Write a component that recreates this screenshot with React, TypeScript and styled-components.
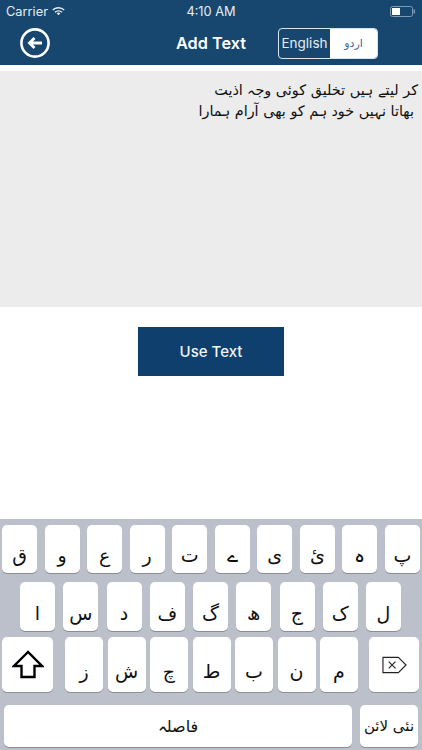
import React from 'react';
import styled, { createGlobalStyle } from 'styled-components';

const Global = createGlobalStyle`
  html, body { margin: 0; padding: 0; background: #fff; }
  body { font-family: "Liberation Sans", Arial, sans-serif; }
  * { box-sizing: border-box; }
`;
const Page = styled.div`
  width: 422px; height: 750px; display: flex; flex-direction: column; overflow: hidden; background: #fff;
`;
const Header = styled.header`
  height: 65px; background: #17466f; color: #fff; flex: none; display: flex; flex-direction: column;
`;
const StatusBar = styled.div`
  height: 22px; display: flex; align-items: center; justify-content: space-between; padding: 0 6px 0 6px;
  font: 12.8px "Inter", sans-serif; color: #e8eef3;
`;
const StatusSide = styled.div<{ $end?: boolean }>`
  width: 90px; display: flex; align-items: center; gap: 4px;
  justify-content: ${p => (p.$end ? 'flex-end' : 'flex-start')};
`;
const NavBar = styled.div`
  flex: 1; display: grid; grid-template-columns: 1fr auto 1fr; align-items: center; padding: 0 20px 1px;
`;
const BackButton = styled.button`
  width: 30px; height: 30px; padding: 0; border: 0; background: none; display: flex;
`;
const Title = styled.h1`
  margin: 0; text-align: center; font: 600 16.3px "Inter", sans-serif; color: #fff;
`;
const Segmented = styled.div`
  justify-self: end; margin-right: 24px;
  width: 100px; height: 31px; display: flex; border: 1px solid #d8e4ee; border-radius: 4px; overflow: hidden;
`;
const Segment = styled.div<{ $on?: boolean }>`
  flex: ${p => (p.$on ? '0 0 47px' : '1')}; display: flex; align-items: center; justify-content: center;
  background: ${p => (p.$on ? '#fff' : 'transparent')}; color: ${p => (p.$on ? '#3f6a8f' : '#e8eef3')};
  font: ${p => (p.$on ? '11px "DejaVu Sans"' : '13.5px "Inter"')}, sans-serif;
`;
const Editor = styled.div`
  margin-top: 6px; height: 236px; flex: none; background: #ececec; padding: 9px 4px 0; direction: rtl;
  font: 14.4px/21px "DejaVu Sans", sans-serif; color: #111;
`;
const Line = styled.div<{ $inset?: boolean }>`
  padding-right: ${p => (p.$inset ? '4px' : '0')};
`;
const ActionArea = styled.div`
  flex: 1; display: flex; justify-content: center; align-items: flex-start; padding-top: 20px;
`;
const UseButton = styled.button`
  width: 146px; height: 49px; border: 0; padding: 0; background: #0e3f6d; color: #f2f5f8;
  font: 500 15px "Inter", sans-serif;
`;
const Keyboard = styled.div`
  height: 231px; flex: none; background: #bbc0ca; display: flex; flex-direction: column; padding-top: 6px;
`;
const KeyRow = styled.div<{ $h: number; $mt: number; $pad: string; $gap?: number }>`
  display: flex; height: ${p => p.$h}px; margin-top: ${p => p.$mt}px; padding: ${p => p.$pad};
  justify-content: ${p => (p.$gap === undefined ? 'space-between' : 'flex-start')};
  gap: ${p => p.$gap ?? 0}px;
`;
const Key = styled.div<{ $w: number }>`
  width: ${p => p.$w}px; flex: none; background: #fff; border-radius: 5px;
  box-shadow: 0 1px 0 #8a8d93; display: flex; align-items: center; justify-content: center; padding-top: 12px;
  font: 19px "DejaVu Sans", sans-serif; color: #111;
`;
const Letters = styled.div`
  display: flex; gap: 4.5px; margin: 0 11px 0 12px;
`;
const IconKey = styled(Key)`
  padding-top: 0;
`;
const SpaceKey = styled(Key)`
  font-size: 16px; padding-top: 0;
`;
const ReturnKey = styled(Key)`
  font-size: 15px; padding-top: 0; white-space: nowrap; letter-spacing: -0.2px;
`;

const row1 = ['ق', 'و', 'ع', 'ر', 'ت', 'ے', 'ی', 'ئ', 'ہ', 'پ'];
const row2 = ['ا', 'س', 'د', 'ف', 'گ', 'ھ', 'ج', 'ک', 'ل'];
const row3 = ['ز', 'ش', 'چ', 'ط', 'ب', 'ن', 'م'];

export default function App() {
  return (
    <Page>
      <Global />
      <Header>
        <StatusBar>
          <StatusSide>
            Carrier
            <svg width="13" height="10" viewBox="0 0 15 11" fill="#e8eef3">
              <path d="M7.5 10.5 5.4 8.2a3 3 0 0 1 4.2 0Z" />
              <path d="M7.5 1C4.7 1 2.2 2.1.4 3.9l1 1.1A8.5 8.5 0 0 1 7.5 2.5a8.5 8.5 0 0 1 6.1 2.5l1-1.1A10 10 0 0 0 7.5 1Z" />
              <path d="M2.9 6.4l1 1.1a5 5 0 0 1 7.2 0l1-1.1a6.6 6.6 0 0 0-9.2 0Z" />
            </svg>
          </StatusSide>
          <span>4:10 AM</span>
          <StatusSide $end>
            <svg width="26" height="11" viewBox="0 0 26 11">
              <rect x="0.5" y="0.5" width="22" height="10" rx="2" fill="none" stroke="#7f9bb3" />
              <rect x="2" y="2" width="8" height="7" fill="#fff" />
              <rect x="23.5" y="3.5" width="1.5" height="4" fill="#7f9bb3" />
            </svg>
          </StatusSide>
        </StatusBar>
        <NavBar>
          <BackButton aria-label="Back">
            <svg width="30" height="30" viewBox="0 0 30 30" fill="none" stroke="#fff">
              <circle cx="15" cy="15" r="13.6" strokeWidth="2.6" />
              <path d="M22 15H10M14.5 10 9.5 15l5 5" strokeWidth="2.8" />
            </svg>
          </BackButton>
          <Title>Add Text</Title>
          <Segmented>
            <Segment>English</Segment>
            <Segment $on>اردو</Segment>
          </Segmented>
        </NavBar>
      </Header>
      <Editor>
        <Line>کر لیتے ہیں تخلیق کوئی وجہ اذیت</Line>
        <Line $inset>بھاتا نہیں خود ہم کو بھی آرام ہمارا</Line>
      </Editor>
      <ActionArea>
        <UseButton>Use Text</UseButton>
      </ActionArea>
      <Keyboard>
        <KeyRow $h={48} $mt={0} $pad="0 2px">
          {row1.map(k => <Key $w={35} key={k}>{k}</Key>)}
        </KeyRow>
        <KeyRow $h={49} $mt={9} $pad="0 0 0 20px" $gap={8.25}>
          {row2.map(k => <Key $w={35} key={k}>{k}</Key>)}
        </KeyRow>
        <KeyRow $h={55} $mt={6} $pad="0 3px 0 2px">
          <IconKey $w={51}>
            <svg width="32" height="30" viewBox="0 0 32 30" fill="none" stroke="#000" strokeWidth="2.4">
              <path d="M16 2 2 16h7.5v11h13V16H30Z" strokeLinejoin="miter" />
            </svg>
          </IconKey>
          <Letters>
            {row3.map(k => <Key $w={38} key={k}>{k}</Key>)}
          </Letters>
          <IconKey $w={50}>
            <svg width="25" height="18" viewBox="0 0 26 18" fill="none" stroke="#222" strokeWidth="1.2">
              <path d="M1 1h16l8 8-8 8H1Z" />
              <path d="M7 5.5l7 7M14 5.5l-7 7" />
            </svg>
          </IconKey>
        </KeyRow>
        <KeyRow $h={42} $mt={13} $pad="0 4px" $gap={8}>
          <SpaceKey $w={348}>فاصلہ</SpaceKey>
          <ReturnKey $w={58}>نئی لائن</ReturnKey>
        </KeyRow>
      </Keyboard>
    </Page>
  );
}
